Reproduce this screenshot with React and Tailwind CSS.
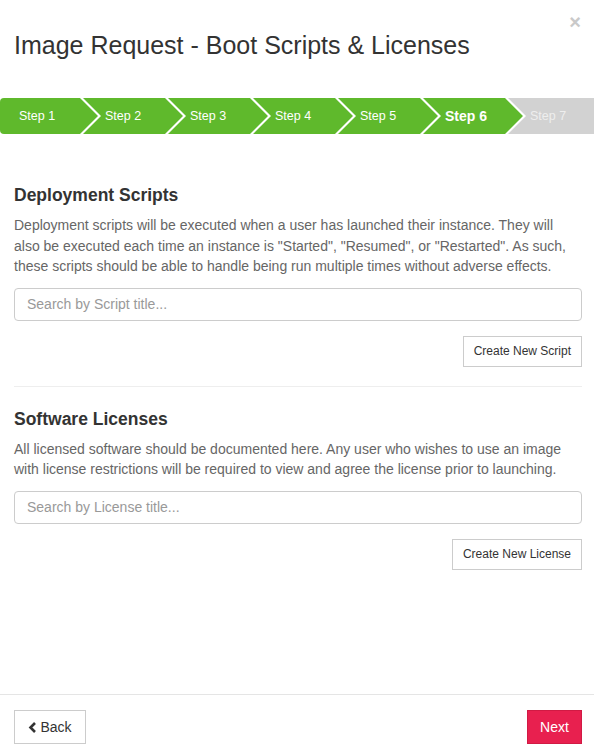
import React from "react";

const font = { fontFamily: '"Liberation Sans", Arial, Helvetica, sans-serif' };

function Steps() {
  const steps = [1, 2, 3, 4, 5, 6, 7];
  return (
    <div className="flex h-9 mt-[38px] bg-white">
      {steps.map((n) => {
        const first = n === 1;
        const last = n === 7;
        const active = n === 6;
        const bg = last ? "bg-[#d2d2d2]" : "bg-[#5fb92c]";
        let shape;
        if (first) {
          shape = "w-[98px] rounded-l-[4px] pl-[19px] [clip-path:polygon(0_0,80px_0,98px_50%,80px_100%,0_100%)]";
        } else if (last) {
          shape = "w-[86px] -ml-[15px] pl-[22px] [clip-path:polygon(0_0,100%_0,100%_100%,0_100%,18px_50%)]";
        } else {
          shape = "w-[100px] -ml-[15px] pl-[22px] [clip-path:polygon(0_0,82px_0,100px_50%,82px_100%,0_100%,18px_50%)]";
        }
        const text = last
          ? "text-[12.5px] text-[#eeeeee]"
          : active
          ? "text-[14px] font-bold text-white"
          : "text-[12.5px] text-white";
        return (
          <div key={n} className={`flex items-center shrink-0 h-9 ${bg} ${shape}`}>
            <span className={text}>Step {n}</span>
          </div>
        );
      })}
    </div>
  );
}

export default function App() {
  return (
    <div className="w-[594px] h-[753px] bg-white flex flex-col text-[#333]" style={font}>
      <div className="relative pl-[14px] pr-[12px] pt-[30px]">
        <h1 className="text-[25px] leading-[30px] text-[#333]">
          Image Request - Boot Scripts &amp; Licenses
        </h1>
        <button className="absolute right-[13px] top-[12px] text-[20px] font-bold leading-none text-[#c9c9c9]">
          ×
        </button>
      </div>

      <Steps />

      <div className="flex-1 pl-[14px] pr-[12px] pt-[51px]">
        <h2 className="text-[17.5px] leading-[20px] font-bold text-[#333]">Deployment Scripts</h2>
        <p className="mt-[10px] text-[14px] leading-[20.5px] text-[#666]">
          Deployment scripts will be executed when a user has launched their instance. They will also be executed each time an instance is "Started", "Resumed", or "Restarted". As such, these scripts should be able to handle being run multiple times without adverse effects.
        </p>
        <input
          className="mt-[11px] w-full h-[33px] border border-[#cccccc] rounded-[4px] px-[12px] text-[14px] text-[#555] placeholder:text-[#999] outline-none"
          placeholder="Search by Script title..."
        />
        <div className="flex justify-end mt-[15px]">
          <button className="h-[31px] px-[10px] border border-[#cccccc] text-[12px] text-[#333] bg-white">
            Create New Script
          </button>
        </div>
        <div className="mt-[19px] border-t border-[#eeeeee]" />

        <h2 className="mt-[22px] text-[17.5px] leading-[20px] font-bold text-[#333]">Software Licenses</h2>
        <p className="mt-[10px] text-[14px] leading-[20.5px] text-[#666]">
          All licensed software should be documented here. Any user who wishes to use an image with license restrictions will be required to view and agree the license prior to launching.
        </p>
        <input
          className="mt-[11px] w-full h-[33px] border border-[#cccccc] rounded-[4px] px-[12px] text-[14px] text-[#555] placeholder:text-[#999] outline-none"
          placeholder="Search by License title..."
        />
        <div className="flex justify-end mt-[15px]">
          <button className="h-[31px] px-[10px] border border-[#cccccc] text-[12px] text-[#333] bg-white">
            Create New License
          </button>
        </div>
      </div>

      <div className="border-t border-[#e5e5e5] h-[59px] pl-[14px] pr-[12px] flex items-start justify-between pt-[15px]">
        <button className="h-[34px] w-[72px] border border-[#cccccc] flex items-center justify-center gap-[3px] text-[14px] text-[#333] bg-white">
          <svg width="9" height="11" viewBox="0 0 9 11" aria-hidden="true">
            <path d="M7 1 L2.5 5.5 L7 10" fill="none" stroke="#333" strokeWidth="2.6" />
          </svg>
          Back
        </button>
        <button className="h-[34px] w-[55px] bg-[#e8204f] border border-[#d11a44] text-[14px] text-white">
          Next
        </button>
      </div>
    </div>
  );
}
